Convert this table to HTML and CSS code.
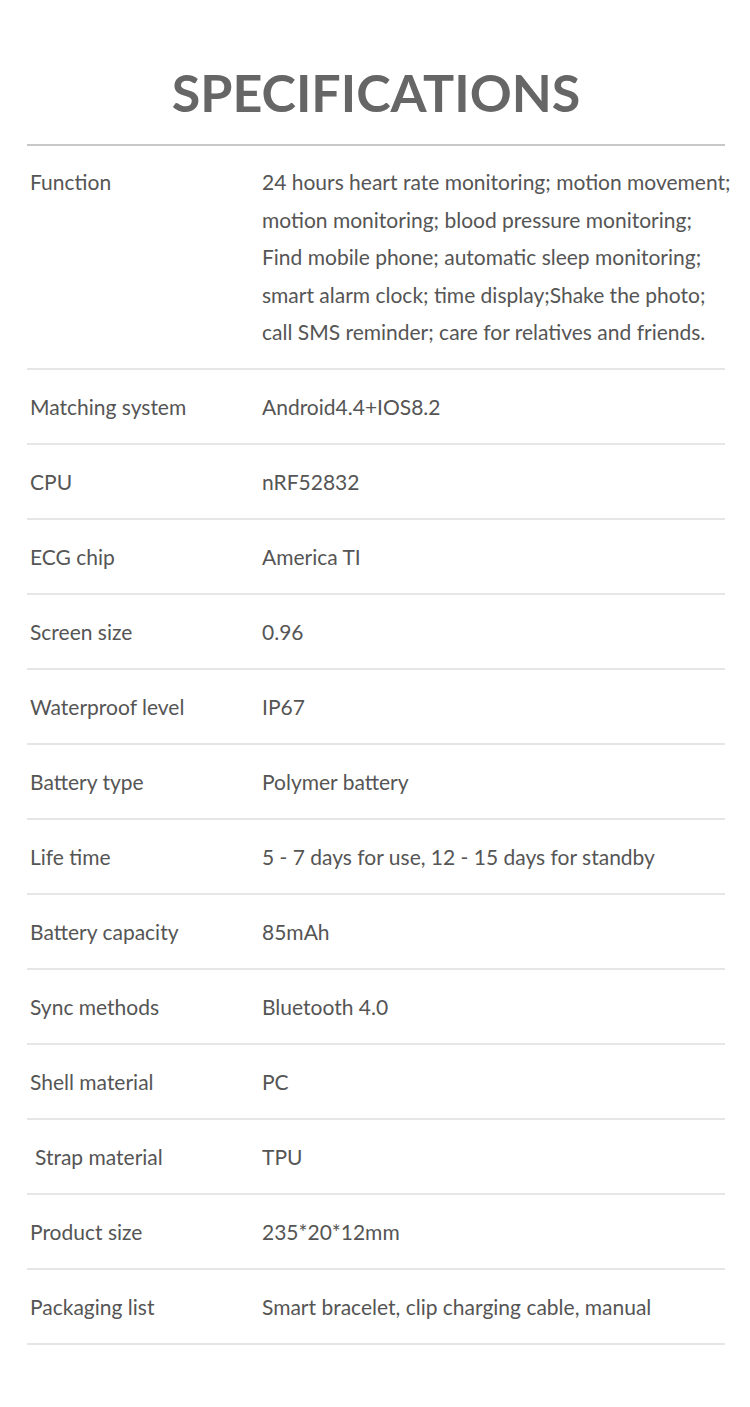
FILE: index.html
```html
<!DOCTYPE html>
<html lang="en">

<head>
    <meta charset="UTF-8">
    <meta name="viewport" content="width=device-width, initial-scale=1.0">
    <title>Specifications</title>
    <link rel="stylesheet" href="styles.css">
</head>

<body>

    <div class="page">
        <h1 class="title">SPECIFICATIONS</h1>

        <div class="spec-table">
            <div class="spec-row spec-row-tall">
                <div class="spec-label">Function</div>
                <div class="spec-value">24 hours heart rate monitoring; motion movement;<br>motion monitoring; blood pressure monitoring;<br>Find mobile phone; automatic sleep monitoring;<br>smart alarm clock; time display;Shake the photo;<br>call SMS reminder; care for relatives and friends.</div>
            </div>
            <div class="spec-row">
                <div class="spec-label">Matching system</div>
                <div class="spec-value">Android4.4+IOS8.2</div>
            </div>
            <div class="spec-row">
                <div class="spec-label">CPU</div>
                <div class="spec-value">nRF52832</div>
            </div>
            <div class="spec-row">
                <div class="spec-label">ECG chip</div>
                <div class="spec-value">America TI</div>
            </div>
            <div class="spec-row">
                <div class="spec-label">Screen size</div>
                <div class="spec-value">0.96</div>
            </div>
            <div class="spec-row">
                <div class="spec-label">Waterproof level</div>
                <div class="spec-value">IP67</div>
            </div>
            <div class="spec-row">
                <div class="spec-label">Battery type</div>
                <div class="spec-value">Polymer battery</div>
            </div>
            <div class="spec-row">
                <div class="spec-label">Life time</div>
                <div class="spec-value">5 - 7 days for use, 12 - 15 days for standby</div>
            </div>
            <div class="spec-row">
                <div class="spec-label">Battery capacity</div>
                <div class="spec-value">85mAh</div>
            </div>
            <div class="spec-row">
                <div class="spec-label">Sync methods</div>
                <div class="spec-value">Bluetooth 4.0</div>
            </div>
            <div class="spec-row">
                <div class="spec-label">Shell material</div>
                <div class="spec-value">PC</div>
            </div>
            <div class="spec-row">
                <div class="spec-label spec-label-indent">Strap material</div>
                <div class="spec-value">TPU</div>
            </div>
            <div class="spec-row">
                <div class="spec-label">Product size</div>
                <div class="spec-value">235*20*12mm</div>
            </div>
            <div class="spec-row">
                <div class="spec-label">Packaging list</div>
                <div class="spec-value">Smart bracelet, clip charging cable, manual</div>
            </div>
        </div>
    </div>

</body>

</html>
```

FILE: styles.css
```css
/* Styles généraux */
* {
    margin: 0;
    padding: 0;
    box-sizing: border-box;
}

body {
    background-color: white;
    font-family: Lato, "Open Sans", sans-serif;
    color: #555;
}

.page {
    padding: 58px 25px 0 27px;
}

/* Titre */
.title {
    font-size: 52px;
    font-weight: 700;
    color: #666;
    text-align: center;
    line-height: 68px;
    padding-bottom: 18px;
    border-bottom: 2px solid #c8c8c8;
}

/* Tableau */
.spec-row {
    display: grid;
    grid-template-columns: 232px 1fr;
    align-items: center;
    height: 75px;
    padding-left: 3px;
    border-bottom: 2px solid #e6e6e6;
    font-size: 21px;
}

.spec-row-tall {
    height: 224px;
    align-items: start;
    padding-top: 17px;
}

.spec-row-tall .spec-label,
.spec-value {
    line-height: 37.5px;
    white-space: nowrap;
}

.spec-label-indent {
    padding-left: 5px;
}
```
